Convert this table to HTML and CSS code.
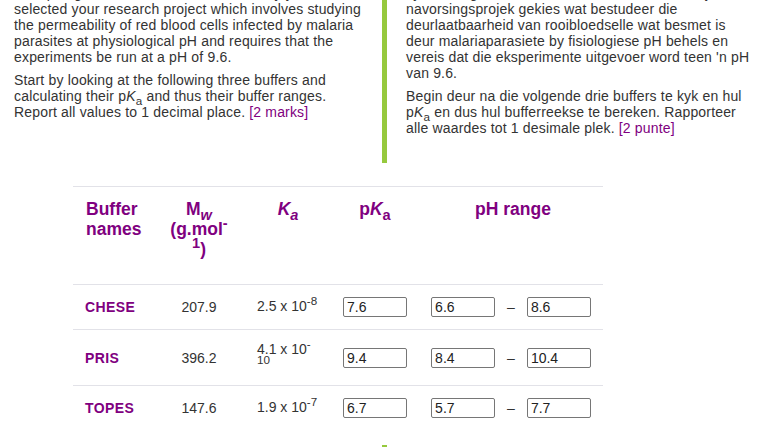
FILE: index.html
```html
<!DOCTYPE html>
<html lang="en">
<head>
<meta charset="utf-8">
<title>Buffer ranges</title>
<link rel="stylesheet" href="styles.css">
</head>
<body>
<main class="page">
  <section class="bilingual">
    <div class="col en">
      <p>As a postgraduate student in biochemistry you have selected your research project which involves studying the permeability of red blood cells infected by malaria parasites at physiological pH and requires that the experiments be run at a pH of 9.6.</p>
      <p>Start by looking at the following three buffers and calculating their p<i>K</i><sub>a</sub> and thus their buffer ranges. Report all values to 1 decimal place. <span class="marks">[2 marks]</span></p>
    </div>
    <div class="col af">
      <p>Jy is 'n nagraadse student in biochemie en het jou navorsingsprojek gekies wat bestudeer die deurlaatbaarheid van rooibloedselle wat besmet is deur malariaparasiete by fisiologiese pH behels en vereis dat die eksperimente uitgevoer word teen 'n pH van 9.6.</p>
      <p>Begin deur na die volgende drie buffers te kyk en hul p<i>K</i><sub>a</sub> en dus hul bufferreekse te bereken. Rapporteer alle waardes tot 1 desimale plek. <span class="marks">[2 punte]</span></p>
    </div>
  </section>

  <table class="buffers">
    <colgroup>
      <col class="c-name"><col class="c-mw"><col class="c-ka"><col class="c-pka"><col class="c-range">
    </colgroup>
    <thead>
      <tr>
        <th class="h-name">Buffer names</th>
        <th class="h-mw">M<sub><i>w</i></sub><br>(g.mol<sup>-<br>1</sup>)</th>
        <th class="h-ka"><i>K<sub>a</sub></i></th>
        <th class="h-pka">p<i>K</i><sub>a</sub></th>
        <th class="h-range">pH range</th>
      </tr>
    </thead>
    <tbody>
      <tr>
        <td class="name">CHESE</td>
        <td class="mw">207.9</td>
        <td class="ka">2.5 x 10<sup>-8</sup></td>
        <td class="pka"><input class="field" type="text" value="7.6"></td>
        <td class="range"><div class="range-inputs"><input class="field" type="text" value="6.6"><span class="dash">–</span><input class="field" type="text" value="8.6"></div></td>
      </tr>
      <tr>
        <td class="name">PRIS</td>
        <td class="mw">396.2</td>
        <td class="ka">4.1 x 10<sup>-<br>10</sup></td>
        <td class="pka"><input class="field" type="text" value="9.4"></td>
        <td class="range"><div class="range-inputs"><input class="field" type="text" value="8.4"><span class="dash">–</span><input class="field" type="text" value="10.4"></div></td>
      </tr>
      <tr>
        <td class="name">TOPES</td>
        <td class="mw">147.6</td>
        <td class="ka">1.9 x 10<sup>-7</sup></td>
        <td class="pka"><input class="field" type="text" value="6.7"></td>
        <td class="range"><div class="range-inputs"><input class="field" type="text" value="5.7"><span class="dash">–</span><input class="field" type="text" value="7.7"></div></td>
      </tr>
    </tbody>
  </table>

  <section class="bilingual next">
    <div class="col en">
      <p>Which of these buffers would be suitable for your experiments?</p>
    </div>
    <div class="col af">
      <p>Watter van hierdie buffers sal geskik wees vir jou eksperimente?</p>
    </div>
  </section>
</main>
</body>
</html>
```

FILE: styles.css
```css
* { box-sizing: border-box; }

html, body {
  margin: 0;
  padding: 0;
  background: #ffffff;
}

body {
  font-family: "Liberation Sans", Arial, sans-serif;
  font-size: 14px;
  line-height: 16px;
  color: #333333;
  overflow: hidden;
}

.page {
  margin-top: -15px;
}

.bilingual {
  display: grid;
  grid-template-columns: 368px 384px;
  padding: 0 14px;
}

.col p {
  margin: 0 0 7px;
  letter-spacing: 0.17px;
}

.en {
  padding-right: 18px;
  padding-bottom: 20px;
}

.af {
  border-left: 5px solid #96c93d;
  padding-left: 19px;
  padding-right: 10px;
  padding-bottom: 20px;
}

.marks {
  color: #800080;
}

sub, sup {
  line-height: 0;
}

/* table */
.buffers {
  border-collapse: collapse;
  table-layout: fixed;
  width: 530px;
  margin: 23px 0 15px 73px;
}

.c-name { width: 90px; }
.c-mw { width: 72px; }
.c-ka { width: 106px; }
.c-pka { width: 68px; }
.c-range { width: 194px; }

.buffers th {
  color: #800080;
  font-size: 17.5px;
  line-height: 20px;
  font-weight: bold;
  vertical-align: top;
  text-align: center;
  padding: 12px 2px 25px;
  border-top: 1px solid #e2e2e8;
}

.buffers th.h-name {
  text-align: left;
  padding-left: 13px;
  padding-right: 8px;
}

.buffers th.h-range {
  padding-left: 16px;
}

.buffers td {
  padding: 12px 0;
  border-top: 1px solid #e2e2e8;
  vertical-align: middle;
  white-space: nowrap;
}

.buffers td.name {
  padding-left: 12px;
  color: #800080;
  font-weight: bold;
  letter-spacing: 0.4px;
}

.buffers td.mw {
  text-align: center;
}

.buffers td.ka {
  padding-left: 22px;
  line-height: 15.5px;
}

.buffers td.pka {
  text-align: center;
}

.buffers td.range {
  padding-left: 10px;
}

.range-inputs {
  display: flex;
  align-items: center;
  justify-content: center;
  gap: 12px;
}

.field {
  display: inline-block;
  width: 64px;
  height: 20px;
  margin: 0;
  padding: 0 3px;
  border: 1px solid #767676;
  border-radius: 2px;
  background: #ffffff;
  font-family: "Liberation Sans", Arial, sans-serif;
  font-size: 14px;
  color: #222222;
  vertical-align: middle;
}

.dash {
  color: #333333;
}
```
